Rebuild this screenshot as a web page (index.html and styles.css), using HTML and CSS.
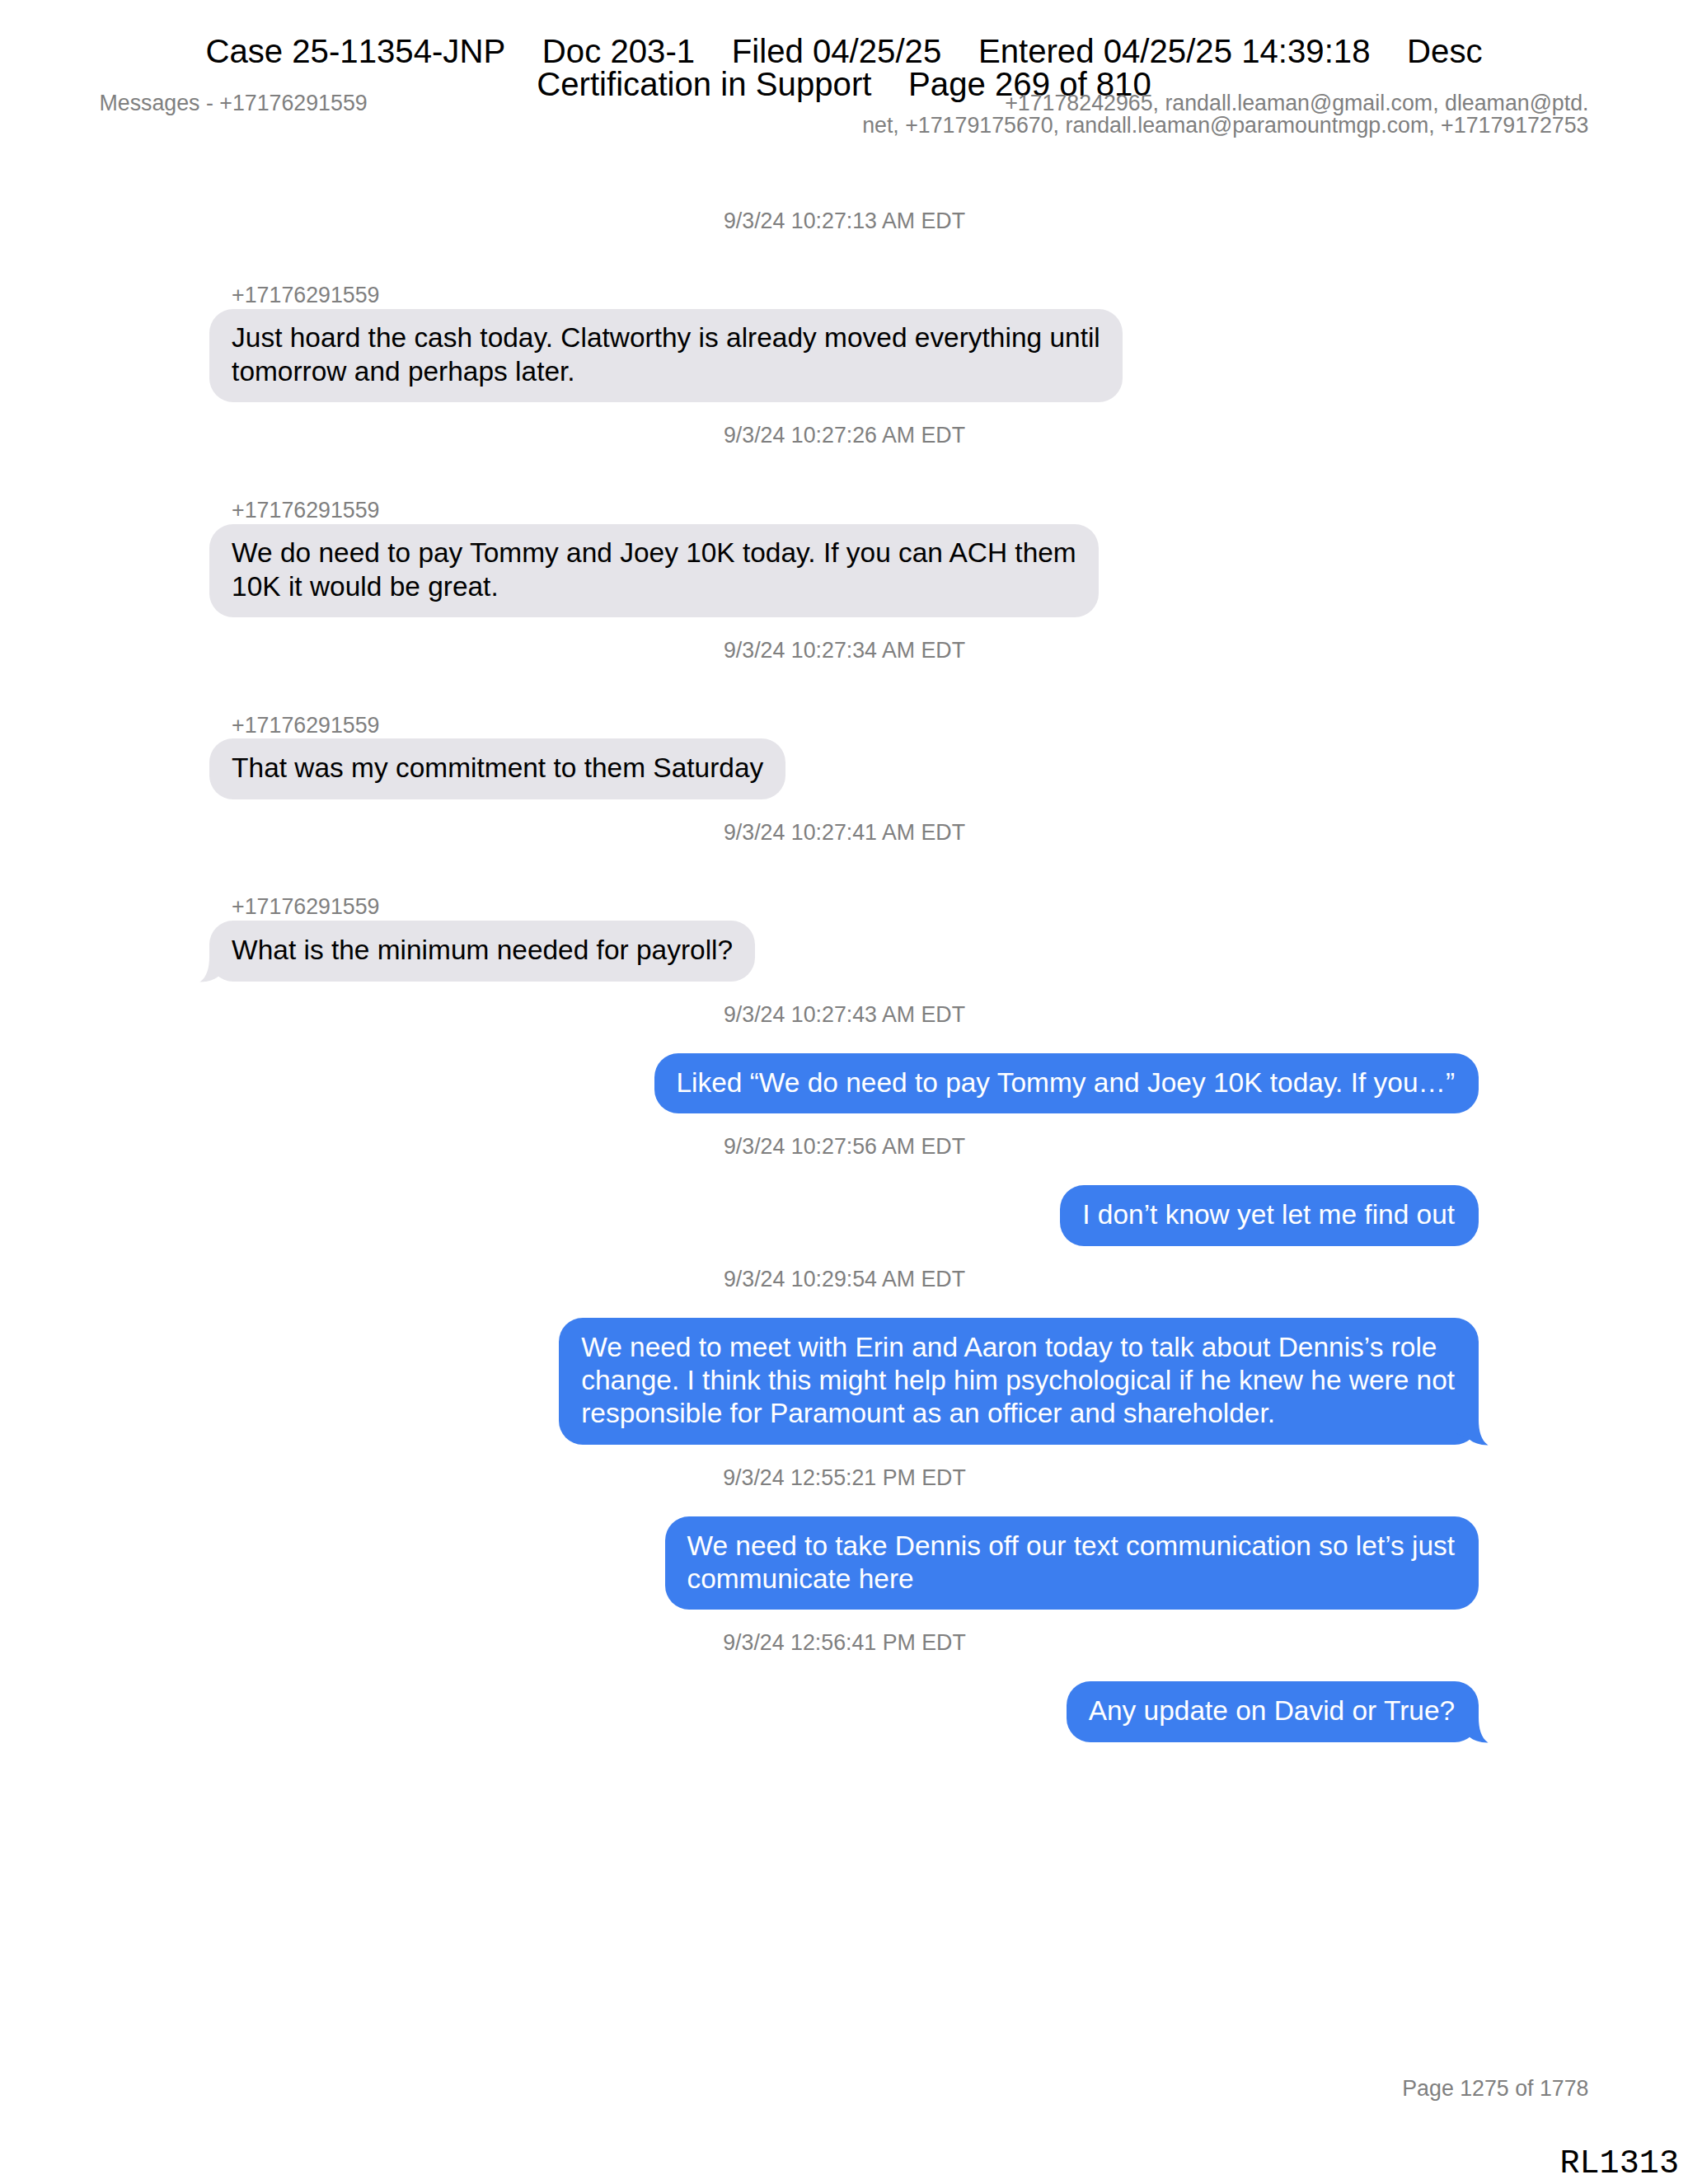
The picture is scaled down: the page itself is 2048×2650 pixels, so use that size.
FILE: index.html
```html
<!DOCTYPE html>
<html lang="en">
<head>
  <meta charset="UTF-8" />
  <title>Messages - +17176291559</title>
  <link rel="stylesheet" href="styles.css">
</head>
<body>
  <div class="page">
    <div class="case-stamp">Case 25-11354-JNP    Doc 203-1    Filed 04/25/25    Entered 04/25/25 14:39:18    Desc<br />Certification in Support    Page 269 of 810</div>

    <header class="page-header">
      <div>Messages - +17176291559</div>
      <div class="recipients">+17178242965, randall.leaman@gmail.com, dleaman@ptd.<br />net, +17179175670, randall.leaman@paramountmgp.com, +17179172753</div>
    </header>

    <main class="messages">
      <div class="time">9/3/24 10:27:13 AM EDT</div>
      <div class="sender">+17176291559</div>
      <div class="bubble received">Just hoard the cash today. Clatworthy is already moved everything until<br />tomorrow and perhaps later.</div>

      <div class="time">9/3/24 10:27:26 AM EDT</div>
      <div class="sender">+17176291559</div>
      <div class="bubble received">We do need to pay Tommy and Joey 10K today. If you can ACH them<br />10K it would be great.</div>

      <div class="time">9/3/24 10:27:34 AM EDT</div>
      <div class="sender">+17176291559</div>
      <div class="bubble received">That was my commitment to them Saturday</div>

      <div class="time">9/3/24 10:27:41 AM EDT</div>
      <div class="sender">+17176291559</div>
      <div class="bubble received">
        What is the minimum needed for payroll?
        <svg class="tail" viewBox="0 0 50 35"><path d="M10 0H38V4C38 17 41 29 49.5 34.4C40 34.6 32 32 26.7 27.5L10 20Z" /></svg>
      </div>

      <div class="time">9/3/24 10:27:43 AM EDT</div>
      <div class="bubble sent">Liked “We do need to pay Tommy and Joey 10K today. If you…”</div>

      <div class="time">9/3/24 10:27:56 AM EDT</div>
      <div class="bubble sent">I don’t know yet let me find out</div>

      <div class="time">9/3/24 10:29:54 AM EDT</div>
      <div class="bubble sent">
        We need to meet with Erin and Aaron today to talk about Dennis’s role<br />change. I think this might help him psychological if he knew he were not<br />responsible for Paramount as an officer and shareholder.
        <svg class="tail" viewBox="0 0 50 35"><path d="M10 0H38V4C38 17 41 29 49.5 34.4C40 34.6 32 32 26.7 27.5L10 20Z" /></svg>
      </div>

      <div class="time">9/3/24 12:55:21 PM EDT</div>
      <div class="bubble sent">We need to take Dennis off our text communication so let’s just<br />communicate here</div>

      <div class="time">9/3/24 12:56:41 PM EDT</div>
      <div class="bubble sent">
        Any update on David or True?
        <svg class="tail" viewBox="0 0 50 35"><path d="M10 0H38V4C38 17 41 29 49.5 34.4C40 34.6 32 32 26.7 27.5L10 20Z" /></svg>
      </div>
    </main>

    <footer>
      <div class="page-number">Page 1275 of 1778</div>
      <div class="bates">RL1313</div>
    </footer>
  </div>
</body>
</html>
```
FILE: styles.css
```css
* {
  box-sizing: border-box;
}
body {
  margin: 0;
  background-color: #fff;
  font-family: "Liberation Sans", Arial, sans-serif;
}
.page {
  display: flex;
  flex-direction: column;
  width: 2048px;
  height: 2650px;
  padding-top: 42.5px;
  overflow: hidden;
}
/* the second stamp line runs into the header below it */
.case-stamp {
  height: 69.5px;
  font-size: 40.16px;
  line-height: 40.16px;
  font-kerning: none;
  text-align: center;
  white-space: pre;
  color: #000;
}
.page-header {
  display: flex;
  justify-content: space-between;
  height: 115.5px;
  padding: 0 120.5px;
  font-size: 26.77px;
  line-height: 26.77px;
  color: #7f7f7f;
}
.recipients {
  text-align: right;
}
.messages {
  display: flex;
  flex-direction: column;
  padding: 0 254.3px;
}
.time,
.sender {
  font-size: 26.77px;
  line-height: 30px;
  color: #7f7f7f;
}
.time {
  margin: 25px 0 32px;
  padding-left: 1px;
  text-align: center;
}
.sender {
  margin: 28.3px 0 1.9px;
  padding-left: 26.8px;
}
.bubble {
  position: relative;
  padding: 15.8px 26.8px 17.6px;
  border-radius: 29px;
  font-size: 33.46px;
  line-height: 40.16px;
}
.received {
  align-self: flex-start;
  background-color: #e5e4e9;
  color: #000;
}
.sent {
  align-self: flex-end;
  padding-right: 28.6px;
  background-color: #3c7eef;
  color: #fff;
}
.tail {
  position: absolute;
  bottom: -1px;
  width: 50px;
  height: 35px;
}
.sent .tail {
  right: -12px;
  fill: #3c7eef;
}
.received .tail {
  left: -12px;
  fill: #e5e4e9;
  transform: scaleX(-1);
}
footer {
  margin-top: auto;
  text-align: right;
}
.page-number {
  padding-right: 120.5px;
  font-size: 26.77px;
  line-height: 30px;
  color: #7f7f7f;
}
.bates {
  margin-top: 55px;
  padding: 0 11px 2px 0;
  font-family: "Liberation Mono", "Courier New", monospace;
  font-size: 40.16px;
  line-height: 44px;
  color: #000;
}
```
